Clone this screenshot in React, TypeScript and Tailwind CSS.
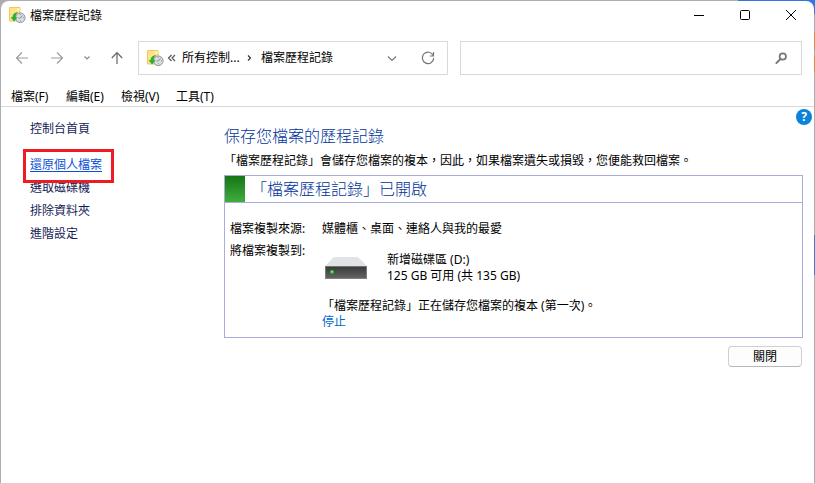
import type { ReactNode } from 'react'

const menus = ['檔案(F)', '編輯(E)', '檢視(V)', '工具(T)']
const tasks = ['選取磁碟機', '排除資料夾', '進階設定']

function HistoryIcon() {
  return (
    <svg width="17" height="17" viewBox="0 0 17 17" className="shrink-0" aria-hidden="true">
      <path d="M.5.5h10.500V14H.5z" fill="#fde48c" stroke="#f0c95c" />
      <path d="M8 1h2.500v3H8z" fill="#fff0b5" />
      <circle cx="11.300" cy="10.800" r="4.800" fill="#d9dee2" stroke="#8d959c" />
      <path d="M11.300 7.300v1M11.300 13.300v1M13.900 10.800h1M11.300 11l2.200-2.500M11.300 11H9.500" stroke="#737b83" strokeWidth=".8" fill="none" />
      <path d="M9.500 5.200C6 4.800 3.600 7 3.500 10.300H1.500l3.600 4.200 3.600-4.200H6.600C6.500 8 7.500 6 9.500 5.200z" fill="#2fae35" />
    </svg>
  )
}

function Line({ d, className = '' }: { d: string; className?: string }) {
  return (
    <svg width="16" height="16" viewBox="0 0 16 16" fill="none" stroke="currentColor" strokeWidth="1.2" className={`shrink-0 ${className}`} aria-hidden="true">
      <path d={d} />
    </svg>
  )
}

function IconButton({ label, className, children }: { label: string; className: string; children: ReactNode }) {
  return (
    <button type="button" aria-label={label} className={`flex items-center justify-center shrink-0 ${className}`}>
      {children}
    </button>
  )
}

function TitleBar() {
  return (
    <header className="flex h-7 items-center pl-2">
      <HistoryIcon />
      <h1 className="ml-1 flex-1 pt-0.5">檔案歷程記錄</h1>
      <IconButton label="最小化" className="h-7 w-[46px]">
        <svg width="10" height="10" aria-hidden="true"><path d="M0 5.500h10" stroke="#000" /></svg>
      </IconButton>
      <IconButton label="最大化" className="h-7 w-[46px]">
        <svg width="10" height="10" fill="none" stroke="#000" aria-hidden="true"><rect x=".5" y=".5" width="9" height="9" rx="1" /></svg>
      </IconButton>
      <IconButton label="關閉視窗" className="h-7 w-[46px]">
        <svg width="10" height="10" stroke="#000" aria-hidden="true"><path d="M0 0l10 10M10 0L0 10" /></svg>
      </IconButton>
    </header>
  )
}

function NavBar() {
  return (
    <div className="mt-3 flex items-center pr-3">
      <nav className="flex w-[137px] shrink-0 items-center pl-3">
        <IconButton label="上一頁" className="w-[18px] text-[#9b9b9b]">
          <Line d="M14 8H2.500M8 2.500L2.500 8 8 13.500" />
        </IconButton>
        <IconButton label="下一頁" className="ml-[17px] w-[18px] text-[#9b9b9b]">
          <Line d="M2 8h11.500M8 2.500L13.500 8 8 13.500" />
        </IconButton>
        <IconButton label="最近位置" className="ml-3 w-[18px] text-[#8a8a8a]">
          <Line d="M5.500 6.500L8 9l2.500-2.500" />
        </IconButton>
        <IconButton label="上一層" className="ml-3 w-[18px] text-[#666]">
          <Line d="M8 14V2.500M2.800 8L8 2.500 13.200 8" />
        </IconButton>
      </nav>
      <div className="flex h-[34px] w-[310px] shrink-0 items-center border border-[#d9d9d9] pl-2">
        <HistoryIcon />
        <Line d="M7.500 5l-3 3 3 3M11 5L8 8l3 3" className="text-[#555]" />
        <span className="ml-0.5 w-[60px]">所有控制...</span>
        <Line d="M6 5.500L8.500 8 6 10.500" className="text-[#333]" />
        <span className="flex-1 pl-[3px]">檔案歷程記錄</span>
        <IconButton label="路徑記錄" className="w-6 text-[#777]">
          <Line d="M4 6.500l4 4 4-4" />
        </IconButton>
        <IconButton label="重新整理" className="ml-3 mr-[7px] w-6 text-[#777]">
          <Line d="M13.200 5.500A5.700 5.700 0 1 0 13.700 8M13.500 2v4H9.800" />
        </IconButton>
      </div>
      <div className="ml-3 flex h-[34px] min-w-0 flex-1 items-center border border-[#d9d9d9]">
        <input type="search" aria-label="搜尋" className="min-w-0 flex-1 px-2 outline-none" />
        <IconButton label="開始搜尋" className="mr-3 w-4 text-[#767676]">
          <svg width="14" height="14" viewBox="0 0 14 14" fill="none" stroke="currentColor" aria-hidden="true">
            <circle cx="8.800" cy="5.500" r="3.200" strokeWidth="1.700" />
            <path d="M6.500 8L1.800 12.700" strokeWidth="1.900" />
          </svg>
        </IconButton>
      </div>
    </div>
  )
}

function Drive() {
  return (
    <svg width="42" height="22" viewBox="0 0 42 22" aria-hidden="true">
      <defs>
        <linearGradient id="front" x1="0" y1="0" x2="0" y2="1">
          <stop offset="0" stopColor="#363636" />
          <stop offset="1" stopColor="#676767" />
        </linearGradient>
      </defs>
      <path d="M9 0h24l9 9H0z" fill="#e1e2e6" />
      <path d="M0 9h42v13H0z" fill="url(#front)" />
      <path d="M0 9.500h42M.5 9v13M41.500 9v13M0 21.500h42" stroke="#8d8d8d" strokeWidth=".7" />
      <circle cx="7" cy="15" r="2" fill="#22c52b" />
      <circle cx="7" cy="14.700" r=".9" fill="#7bf57d" />
    </svg>
  )
}

function Sidebar() {
  return (
    <nav className="w-[223px] shrink-0 pt-[13px] text-[#151c55]">
      <a href="#home" className="ml-[29px] block h-[18px] leading-[18px]">控制台首頁</a>
      <a href="#restore" className="relative z-10 ml-[22px] mt-[11px] flex h-[34px] w-[91px] items-center border-3 border-[#ed1c24] pb-0.5 pl-1 text-[#0b50d8] underline underline-offset-2">
        還原個人檔案
      </a>
      <ul className="-mt-[7px] ml-[29px]">
        {tasks.map((task) => (
          <li key={task} className="h-[23px] leading-[23px]">
            <a href="#task">{task}</a>
          </li>
        ))}
      </ul>
    </nav>
  )
}

function StatusPanel() {
  return (
    <section className="mt-[5px] border border-[#a9aed8]">
      <div className="flex h-[27px] items-center border-b border-[#a9aed8]">
        <div className="h-full w-5 bg-linear-to-b from-[#167516] to-[#3fae3c]" />
        <h3 className="ml-1.5 text-base font-light leading-6 text-[#003399]">「檔案歷程記錄」已開啟</h3>
      </div>
      <dl className="grid grid-cols-[92px_1fr] px-[5px] pb-2 pt-[17px]">
        <dt className="h-[22px] leading-[18px]">檔案複製來源:</dt>
        <dd className="leading-[18px]">媒體櫃、桌面、連絡人與我的最愛</dd>
        <dt className="leading-[18px]">將檔案複製到:</dt>
        <dd>
          <div className="flex pl-[3px] pt-2.5">
            <div className="mt-[5px] w-[62px]">
              <Drive />
            </div>
            <div className="leading-4">
              <p>新增磁碟區 (D:)</p>
              <p>125 GB 可用 (共 135 GB)</p>
            </div>
          </div>
          <p className="mt-3.5 leading-[15px]">「檔案歷程記錄」正在儲存您檔案的複本 (第一次)。</p>
          <button type="button" className="mt-px block leading-[15px] text-[#0066cc]">停止</button>
        </dd>
      </dl>
    </section>
  )
}

export default function App() {
  return (
    <div
      lang="zh-Hant"
      className="relative flex min-h-screen flex-col bg-[#adadad] px-px pt-px font-['Noto_Sans','Noto_Sans_CJK_TC',sans-serif] text-xs text-black"
    >
      {/* desktop showing round the window edge */}
      <div className="absolute right-0 top-0 h-8 w-[77px] bg-linear-to-b from-[#2f78e4] from-40% to-[#adadad] to-50%" />
      <div className="absolute right-0 top-8 h-[18px] w-px bg-[#d58a3e]" />
      <div className="absolute right-0 top-14 h-4 w-px bg-[#d58a3e]" />
      <div className="absolute right-0 top-[235px] h-10 w-px bg-[#3f78c4]" />
      <div className="relative flex flex-1 flex-col rounded-t-lg bg-white">
        <TitleBar />
        <NavBar />
        <div className="mt-3 flex h-5 items-center border-b border-[#d9d9d9] pl-2.5">
          {menus.map((menu) => (
            <button key={menu} type="button" className="w-[55px] shrink-0 text-left">
              {menu}
            </button>
          ))}
        </div>
        <div className="relative flex flex-1">
          <Sidebar />
          <main className="min-w-0 flex-1 pr-[11px] pt-[17px]">
            <h2 className="text-base font-light leading-6 text-[#003399]">保存您檔案的歷程記錄</h2>
            <p className="mt-1 leading-[18px]">「檔案歷程記錄」會儲存您檔案的複本，因此，如果檔案遺失或損毀，您便能救回檔案。</p>
            <StatusPanel />
            <div className="mt-2 flex justify-end pr-px">
              <button type="button" className="h-[21px] w-[74px] rounded-sm border border-[#d0d0d0] border-b-[#b8b8b8] bg-[#fdfdfd] leading-[18px]">
                關閉
              </button>
            </div>
          </main>
          <button
            type="button"
            aria-label="說明"
            className="absolute right-0.5 top-0.5 flex size-4 items-center justify-center rounded-full bg-[#0b83d9] text-xs font-bold leading-4 text-white"
          >
            ?
          </button>
        </div>
      </div>
    </div>
  )
}
